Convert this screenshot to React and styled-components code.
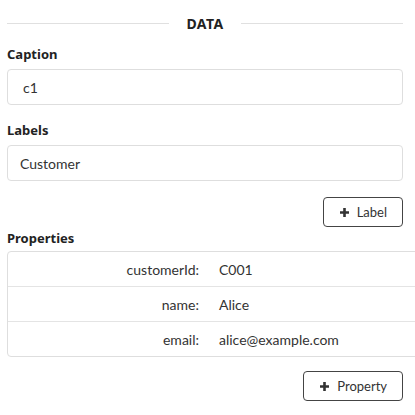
import React from "react";
import styled, { createGlobalStyle } from "styled-components";

const GlobalStyle = createGlobalStyle`
  html, body {
    margin: 0;
    padding: 0;
    background: #ffffff;
    overflow: hidden;
  }
`;

const properties = [
  { key: "customerId", value: "C001" },
  { key: "name", value: "Alice" },
  { key: "email", value: "alice@example.com" },
];

function PlusIcon() {
  return (
    <svg width="11" height="11" viewBox="0 0 11 11">
      <path d="M5.5 1v9M1 5.5h9" stroke="#333" strokeWidth="2.6" />
    </svg>
  );
}

function App() {
  return (
    <>
      <GlobalStyle />
      <Panel>
        <Divider>
          <Line />
          <DividerText>DATA</DividerText>
          <Line />
        </Divider>

        <FieldLabel $top={11}>Caption</FieldLabel>
        <Input $mono>c1</Input>

        <FieldLabel $top={16}>Labels</FieldLabel>
        <Input>Customer</Input>

        <ButtonRow>
          <Button>
            <PlusIcon />
            Label
          </Button>
        </ButtonRow>

        <FieldLabel $top={2}>Properties</FieldLabel>
        <Table>
          {properties.map((p) => (
            <Row key={p.key}>
              <Key>{p.key}:</Key>
              <Value>{p.value}</Value>
            </Row>
          ))}
        </Table>

        <ButtonRow $top={14}>
          <Button>
            <PlusIcon />
            Property
          </Button>
        </ButtonRow>
      </Panel>
    </>
  );
}
export default App;

const Panel = styled.div`
  box-sizing: border-box;
  width: 403px;
  padding: 12px 0 0 7px;
  font-family: Lato, "Liberation Sans", sans-serif;
  color: #333;
`;

const Divider = styled.div`
  display: flex;
  align-items: center;
  gap: 17px;
  height: 22px;
`;

const Line = styled.div`
  flex: 1;
  height: 1px;
  background-color: #e0e0e0;
`;

const DividerText = styled.div`
  font-family: "Noto Sans", "Open Sans", sans-serif;
  font-size: 14px;
  font-weight: 700;
  letter-spacing: 0.4px;
  color: #222;
`;

const FieldLabel = styled.div`
  margin-top: ${(p) => p.$top}px;
  height: 18px;
  line-height: 18px;
  font-family: "Noto Sans", "Open Sans", sans-serif;
  font-size: 13px;
  font-weight: 700;
  color: #222;
`;

const Input = styled.div`
  box-sizing: border-box;
  display: flex;
  align-items: center;
  height: 36px;
  margin-top: 6px;
  padding: 0 ${(p) => (p.$mono ? 15 : 12)}px;
  border: 1px solid #dedede;
  border-radius: 4px;
  font-size: 14px;
  color: #333;
`;

const ButtonRow = styled.div`
  display: flex;
  justify-content: flex-end;
  margin-top: ${(p) => p.$top ?? 16}px;
`;

const Button = styled.div`
  box-sizing: border-box;
  display: flex;
  align-items: center;
  gap: 7px;
  height: 30px;
  padding: 0 15px;
  border: 1px solid #444;
  border-radius: 4px;
  font-size: 13px;
  color: #333;
  background: #fff;
`;

const Table = styled.div`
  box-sizing: border-box;
  width: 430px;
  margin-top: 4px;
  border: 1px solid #dedede;
  border-radius: 4px;
`;

const Row = styled.div`
  display: grid;
  grid-template-columns: 193px 1fr;
  column-gap: 18px;
  align-items: center;
  height: 34px;
  font-size: 14px;
  color: #333;

  & + & {
    border-top: 1px solid #e4e4e4;
  }
`;

const Key = styled.div`
  text-align: right;
  word-spacing: 2px;
  &::after {
    content: "";
    display: inline-block;
    width: 2px;
  }
`;

const Value = styled.div``;
